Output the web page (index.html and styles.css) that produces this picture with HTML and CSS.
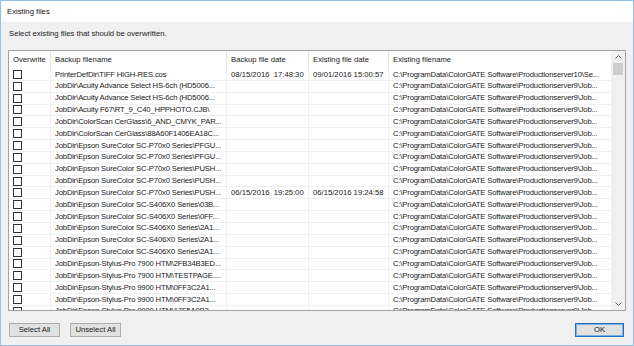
FILE: index.html
```html
<!DOCTYPE html>
<html>
<head>
<meta charset="utf-8">
<title>Existing files</title>
<link rel="stylesheet" href="styles.css">
</head>
<body>
<div class="window">
  <div class="titlebar">Existing files</div>
  <div class="content">
    <div class="instruction">Select existing files that should be overwritten.</div>
    <div class="list">
      <div class="table">
        <div class="grid">
          <div class="th">Overwrite</div><div class="th">Backup filename</div><div class="th">Backup file date</div><div class="th">Existing file date</div><div class="th">Existing filename</div>

          <div class="td"><span class="cb"></span></div><div class="td fn">PrinterDefDir\TIFF HIGH-RES.cos</div><div class="td">08/15/2016&nbsp;&nbsp;17:48:30</div><div class="td">09/01/2016 15:00:57</div><div class="td fn">C:\ProgramData\ColorGATE Software\Productionserver10\Se...</div>
          <div class="td"><span class="cb"></span></div><div class="td fn">JobDir\Acuity Advance Select HS-6ch (HD5006...</div><div class="td"></div><div class="td"></div><div class="td fn">C:\ProgramData\ColorGATE Software\Productionserver9\Job...</div>
          <div class="td"><span class="cb"></span></div><div class="td fn">JobDir\Acuity Advance Select HS-6ch (HD5006...</div><div class="td"></div><div class="td"></div><div class="td fn">C:\ProgramData\ColorGATE Software\Productionserver9\Job...</div>
          <div class="td"><span class="cb"></span></div><div class="td fn">JobDir\Acuity F67\RT_9_C40_HPPHOTO.CJB\</div><div class="td"></div><div class="td"></div><div class="td fn">C:\ProgramData\ColorGATE Software\Productionserver9\Job...</div>
          <div class="td"><span class="cb"></span></div><div class="td fn">JobDir\ColorScan CerGlass\6_AND_CMYK_PAR...</div><div class="td"></div><div class="td"></div><div class="td fn">C:\ProgramData\ColorGATE Software\Productionserver9\Job...</div>
          <div class="td"><span class="cb"></span></div><div class="td fn">JobDir\ColorScan CerGlass\88A60F1406EA18C...</div><div class="td"></div><div class="td"></div><div class="td fn">C:\ProgramData\ColorGATE Software\Productionserver9\Job...</div>
          <div class="td"><span class="cb"></span></div><div class="td fn">JobDir\Epson SureColor SC-P70x0 Series\PFGU...</div><div class="td"></div><div class="td"></div><div class="td fn">C:\ProgramData\ColorGATE Software\Productionserver9\Job...</div>
          <div class="td"><span class="cb"></span></div><div class="td fn">JobDir\Epson SureColor SC-P70x0 Series\PFGU...</div><div class="td"></div><div class="td"></div><div class="td fn">C:\ProgramData\ColorGATE Software\Productionserver9\Job...</div>
          <div class="td"><span class="cb"></span></div><div class="td fn">JobDir\Epson SureColor SC-P70x0 Series\PUSH...</div><div class="td"></div><div class="td"></div><div class="td fn">C:\ProgramData\ColorGATE Software\Productionserver9\Job...</div>
          <div class="td"><span class="cb"></span></div><div class="td fn">JobDir\Epson SureColor SC-P70x0 Series\PUSH...</div><div class="td"></div><div class="td"></div><div class="td fn">C:\ProgramData\ColorGATE Software\Productionserver9\Job...</div>
          <div class="td"><span class="cb"></span></div><div class="td fn">JobDir\Epson SureColor SC-P70x0 Series\PUSH...</div><div class="td">06/15/2016&nbsp;&nbsp;19:25:00</div><div class="td">06/15/2016 19:24:58</div><div class="td fn">C:\ProgramData\ColorGATE Software\Productionserver9\Job...</div>
          <div class="td"><span class="cb"></span></div><div class="td fn">JobDir\Epson SureColor SC-S406X0 Series\03B...</div><div class="td"></div><div class="td"></div><div class="td fn">C:\ProgramData\ColorGATE Software\Productionserver9\Job...</div>
          <div class="td"><span class="cb"></span></div><div class="td fn">JobDir\Epson SureColor SC-S406X0 Series\0FF...</div><div class="td"></div><div class="td"></div><div class="td fn">C:\ProgramData\ColorGATE Software\Productionserver9\Job...</div>
          <div class="td"><span class="cb"></span></div><div class="td fn">JobDir\Epson SureColor SC-S406X0 Series\2A1...</div><div class="td"></div><div class="td"></div><div class="td fn">C:\ProgramData\ColorGATE Software\Productionserver9\Job...</div>
          <div class="td"><span class="cb"></span></div><div class="td fn">JobDir\Epson SureColor SC-S406X0 Series\2A1...</div><div class="td"></div><div class="td"></div><div class="td fn">C:\ProgramData\ColorGATE Software\Productionserver9\Job...</div>
          <div class="td"><span class="cb"></span></div><div class="td fn">JobDir\Epson SureColor SC-S406X0 Series\2A1...</div><div class="td"></div><div class="td"></div><div class="td fn">C:\ProgramData\ColorGATE Software\Productionserver9\Job...</div>
          <div class="td"><span class="cb"></span></div><div class="td fn">JobDir\Epson-Stylus-Pro 7900 HTM\2FB34B3ED...</div><div class="td"></div><div class="td"></div><div class="td fn">C:\ProgramData\ColorGATE Software\Productionserver9\Job...</div>
          <div class="td"><span class="cb"></span></div><div class="td fn">JobDir\Epson-Stylus-Pro 7900 HTM\TESTPAGE....</div><div class="td"></div><div class="td"></div><div class="td fn">C:\ProgramData\ColorGATE Software\Productionserver9\Job...</div>
          <div class="td"><span class="cb"></span></div><div class="td fn">JobDir\Epson-Stylus-Pro 9900 HTM\0FF3C2A1...</div><div class="td"></div><div class="td"></div><div class="td fn">C:\ProgramData\ColorGATE Software\Productionserver9\Job...</div>
          <div class="td"><span class="cb"></span></div><div class="td fn">JobDir\Epson-Stylus-Pro 9900 HTM\0FF3C2A1...</div><div class="td"></div><div class="td"></div><div class="td fn">C:\ProgramData\ColorGATE Software\Productionserver9\Job...</div>
          <div class="td"><span class="cb"></span></div><div class="td fn">JobDir\Epson-Stylus-Pro 9900 HTM\17F5A0B2...</div><div class="td"></div><div class="td"></div><div class="td fn">C:\ProgramData\ColorGATE Software\Productionserver9\Job...</div>
        </div>
      </div>
      <div class="scrollbar">
        <div class="sb-btn"><svg width="7" height="4" viewBox="0 0 7 4"><polyline points="0.5,3.5 3.5,0.5 6.5,3.5" fill="none" stroke="#606060" stroke-width="1"/></svg></div>
        <div class="thumb"></div>
        <div class="sb-track"></div>
        <div class="sb-btn"><svg width="7" height="4" viewBox="0 0 7 4"><polyline points="0.5,0.5 3.5,3.5 6.5,0.5" fill="none" stroke="#606060" stroke-width="1"/></svg></div>
      </div>
    </div>
    <div class="footer">
      <button class="btn btn-select">Select All</button>
      <button class="btn btn-unselect">Unselect All</button>
      <span class="spacer"></span>
      <button class="btn btn-ok">OK</button>
    </div>
  </div>
</div>
</body>
</html>
```
FILE: styles.css
```css
* { box-sizing: border-box; }
html, body { margin: 0; padding: 0; }
body {
  font-family: "Liberation Sans", Arial, sans-serif;
  font-size: 7.7px;
  color: #1a1a1a;
  background: #f0f0f0;
}
.window {
  width: 634px;
  height: 346px;
  border: 1px solid #92c0ec;
  display: flex;
  flex-direction: column;
  background: #f0f0f0;
}
.titlebar {
  height: 21px;
  background: #fff;
  padding-left: 6px;
  display: flex;
  align-items: center;
  color: #111;
}
.content {
  flex: 1;
  display: flex;
  flex-direction: column;
  padding: 0 7px;
}
.instruction {
  padding-top: 7px;
  height: 17px;
  line-height: 10px;
  margin-bottom: 11px;
  padding-left: 1px;
}
.list {
  height: 261px;
  border: 1px solid #a3a3a3;
  background: #fff;
  display: flex;
}
.table {
  flex: 1;
  overflow: hidden;
}
.grid {
  display: grid;
  grid-template-columns: 42px 176px 82px 80px 222px;
  grid-template-rows: 18px;
  grid-auto-rows: 11.85px;
}
.th {
  line-height: 18px;
  padding-left: 4px;
  border-right: 1px solid #e5e5e5;
  white-space: nowrap;
  overflow: hidden;
}
.th:nth-child(5) { border-right: none; }
.td {
  line-height: 11.85px;
  padding-left: 4px;
  border-right: 1px solid #f0f0f0;
  border-bottom: 1px solid #f0f0f0;
  white-space: nowrap;
  overflow: hidden;
  display: flex;
  align-items: center;
}
.td.fn { letter-spacing: -0.17px; }
.td:nth-child(5n) { border-right: none; }
.cb {
  display: block;
  width: 9px;
  height: 9px;
  border: 1px solid #333;
  background: #fff;
}
.scrollbar {
  width: 14px;
  background: #f0f0f0;
  display: flex;
  flex-direction: column;
  align-items: center;
}
.sb-btn {
  height: 12px;
  width: 100%;
  display: flex;
  align-items: center;
  justify-content: center;
}
.thumb {
  width: 10px;
  height: 12px;
  background: #cdcdcd;
}
.sb-track { flex: 1; }
.footer {
  display: flex;
  align-items: flex-start;
  padding-top: 12px;
}
.btn {
  font-family: "Liberation Sans", Arial, sans-serif;
  font-size: 7.7px;
  color: #1a1a1a;
  height: 14px;
  padding: 0;
  background: #e1e1e1;
  border: 1px solid #adadad;
  border-radius: 0;
  line-height: 12px;
}
.btn-select { width: 51px; margin-left: 1px; }
.btn-unselect { width: 51px; margin-left: 10px; }
.spacer { flex: 1; }
.btn-ok {
  width: 49px;
  margin-right: 2px;
  border: 1px solid #1f72c0;
  box-shadow: inset 0 0 0 1px #7fb0de;
}
```
